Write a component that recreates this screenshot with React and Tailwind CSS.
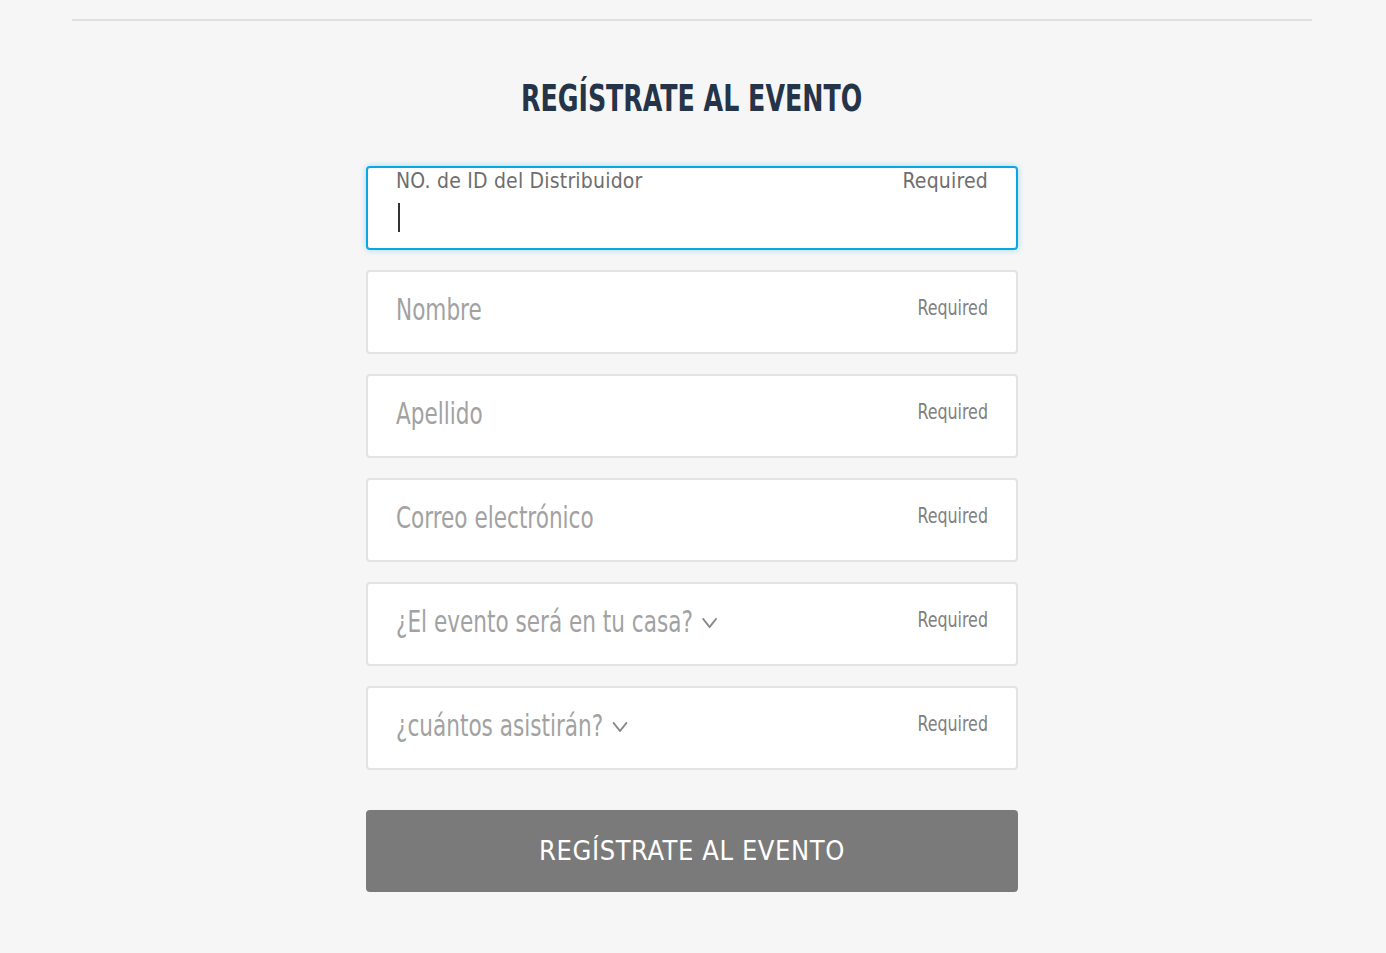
const FONT = "font-['DejaVu_Sans_Condensed','Roboto',sans-serif]"

const FIELDS = [
  { id: 'nombre', label: 'Nombre' },
  { id: 'apellido', label: 'Apellido' },
  { id: 'correo', label: 'Correo electrónico' },
  { id: 'casa', label: '¿El evento será en tu casa?', select: true },
  { id: 'asistentes', label: '¿cuántos asistirán?', select: true },
]

function Chevron() {
  return (
    <svg width="20" height="12" viewBox="0 0 20 12" fill="none" className="mt-[4px]">
      <path d="M2 2l8 8 8-8" stroke="#8a8a8a" strokeWidth="2.2" strokeLinecap="round" strokeLinejoin="round" />
    </svg>
  )
}

function Field({ label, select }) {
  return (
    <div className="flex h-[84px] items-center justify-between rounded-[4px] border-2 border-[#e3e3e3] bg-white px-[28px] pb-[6px]">
      <span className="inline-flex origin-left scale-x-[0.8] items-center gap-[11px] whitespace-nowrap text-[30px] font-light text-[#a2a2a2]">
        {label}
        {select && <Chevron />}
      </span>
      <span className="inline-block origin-right scale-x-[0.84] text-[21px] text-[#808080]">Required</span>
    </div>
  )
}

export default function App() {
  return (
    <div className={`min-h-[953px] bg-[#f6f6f6] pt-[19px] pr-[2px] ${FONT}`}>
      <div className="mx-[72px] h-[2px] bg-[#e0e0e0]" />

      <h1 className="mt-[55px] text-center text-[38px] font-bold leading-[44px] text-[#253449]">
        <span className="inline-block scale-x-[0.74]">REGÍSTRATE AL EVENTO</span>
      </h1>

      <form className="mx-auto mt-[46px] flex w-[652px] flex-col gap-[20px]">
        {/* focused field */}
        <div className="h-[84px] rounded-[4px] border-2 border-[#0aa6e2] bg-white px-[28px] shadow-[0_0_6px_rgba(10,166,226,0.35)]">
          <div className="flex items-center justify-between pt-[1px] text-[21px] leading-[24px] tracking-[0.2px] text-[#6e6e6e]">
            <span>NO. de ID del Distribuidor</span>
            <span>Required</span>
          </div>
          <div className="mt-[10px] ml-[2px] h-[29px] w-[2px] bg-[#333]" />
        </div>

        {FIELDS.map(f => (
          <Field key={f.id} label={f.label} select={f.select} />
        ))}

        <button
          type="button"
          className="mt-[20px] h-[82px] rounded-[4px] bg-[#7a7a7a] text-[27px] tracking-[0.6px] text-white"
        >
          REGÍSTRATE AL EVENTO
        </button>
      </form>
    </div>
  )
}
